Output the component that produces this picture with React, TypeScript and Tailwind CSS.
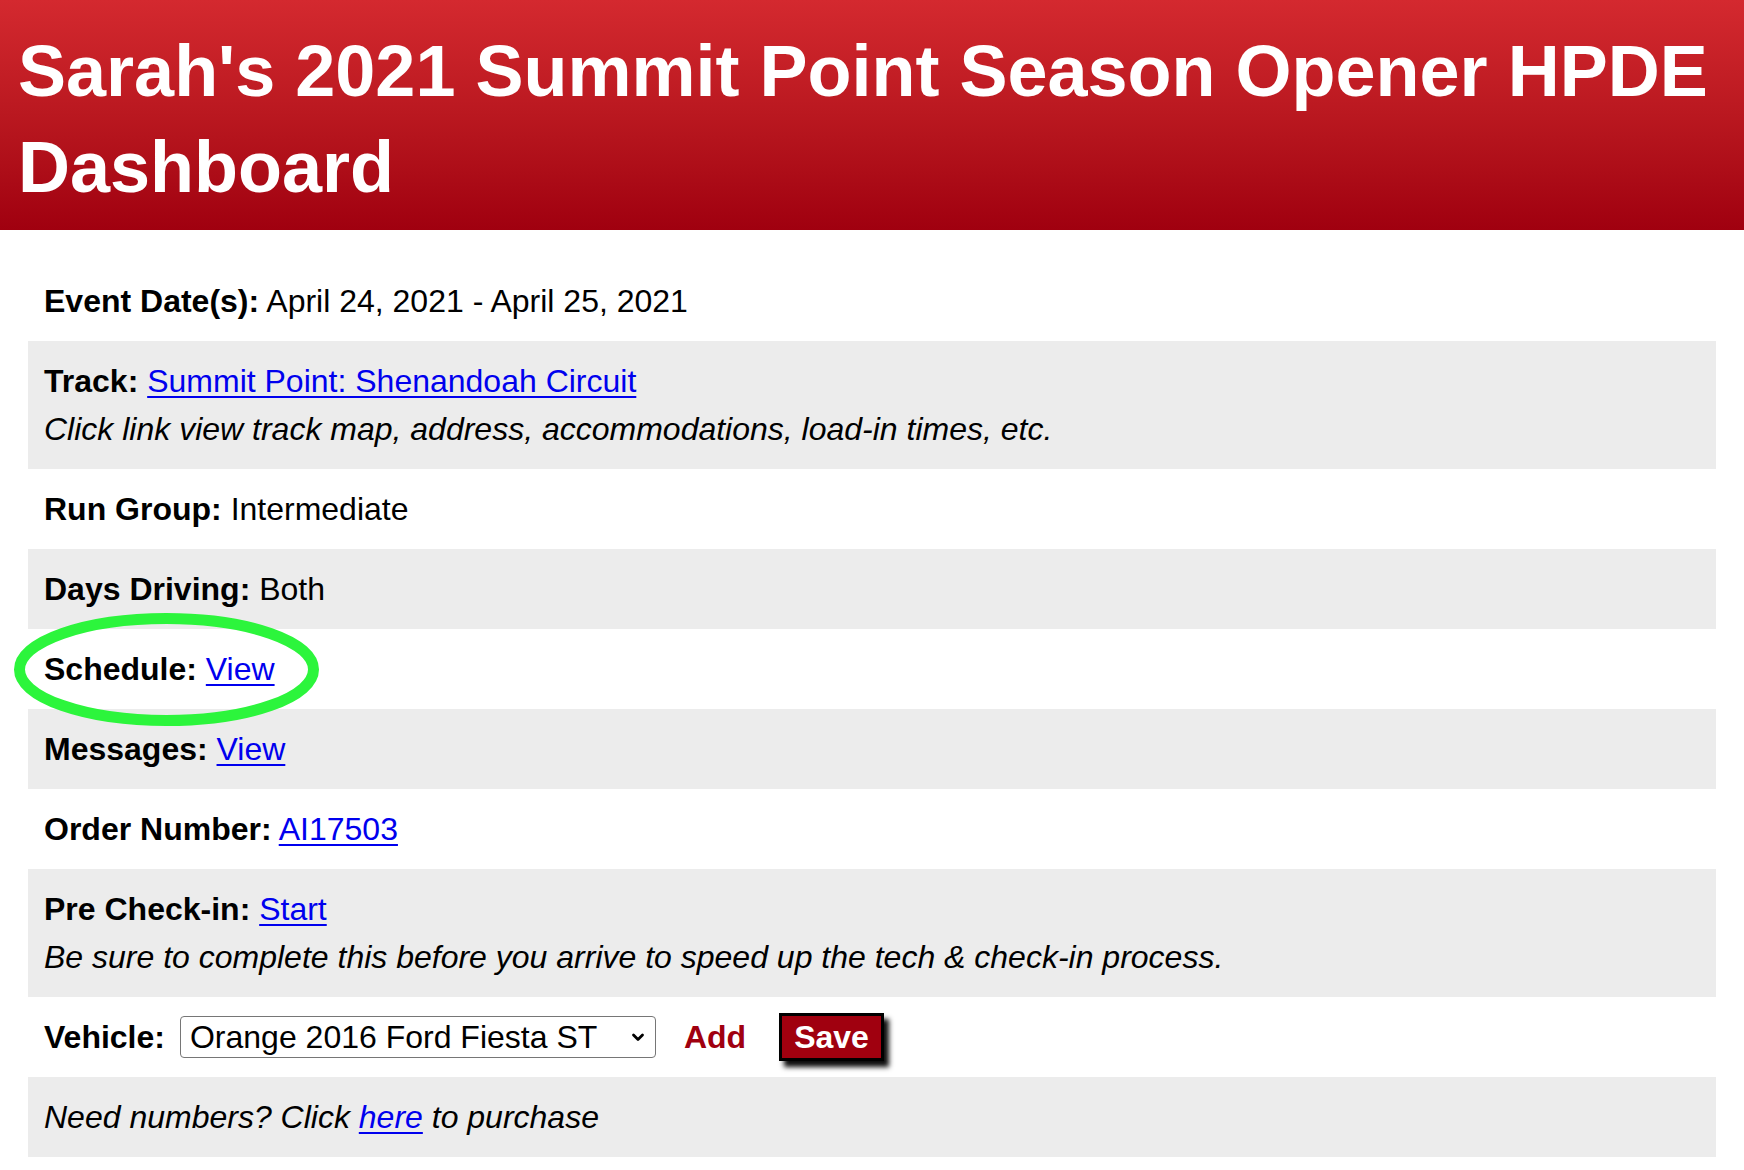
import React from "react";

const font = { fontFamily: '"Liberation Sans", Arial, Helvetica, sans-serif' };

function Row({ gray, children, className = "" }: { gray?: boolean; children: React.ReactNode; className?: string }) {
  return (
    <div className={`px-[16px] py-[16px] text-[32px] leading-[48px] text-black ${gray ? "bg-[#ececec]" : "bg-white"} ${className}`}>
      {children}
    </div>
  );
}

function A({ children }: { children: React.ReactNode }) {
  return <a href="#" className="text-[#0000ee] underline decoration-[2px] underline-offset-[4px]">{children}</a>;
}

export default function App() {
  return (
    <div className="min-h-[1170px] bg-white" style={font}>
      <header className="bg-gradient-to-b from-[#d4292f] to-[#a0000f] pl-[18px] pr-[18px] pt-[23px] pb-[15px]">
        <h1 className="text-[72px] leading-[96px] font-bold text-white">
          Sarah's 2021 Summit Point Season Opener HPDE Dashboard
        </h1>
      </header>
      <main className="px-[28px] pt-[31px]">
        <Row>
          <b>Event Date(s):</b> April 24, 2021 - April 25, 2021
        </Row>
        <Row gray>
          <div>
            <b>Track:</b> <A>Summit Point: Shenandoah Circuit</A>
          </div>
          <div className="italic">Click link view track map, address, accommodations, load-in times, etc.</div>
        </Row>
        <Row>
          <b>Run Group:</b> Intermediate
        </Row>
        <Row gray>
          <b>Days Driving:</b> Both
        </Row>
        <Row className="relative">
          <b>Schedule:</b> <A>View</A>
          <svg
            className="absolute left-[-15px] top-[-17px] pointer-events-none"
            width="307"
            height="115"
            viewBox="0 0 307 115"
          >
            <ellipse cx="153.5" cy="57.5" rx="147" ry="51" fill="none" stroke="#2cf53c" strokeWidth="11" />
          </svg>
        </Row>
        <Row gray>
          <b>Messages:</b> <A>View</A>
        </Row>
        <Row>
          <b>Order Number:</b> <A>AI17503</A>
        </Row>
        <Row gray>
          <div>
            <b>Pre Check-in:</b> <A>Start</A>
          </div>
          <div className="italic">Be sure to complete this before you arrive to speed up the tech &amp; check-in process.</div>
        </Row>
        <Row>
          <div className="flex items-center">
            <b>Vehicle:</b>
            <div className="relative ml-[15px] w-[476px] h-[42px]">
              <select
                className="block appearance-none w-full h-[42px] rounded-[4px] border-[1.5px] border-[#767676] bg-white pl-[9px] pr-[40px] text-[32px] leading-[36px] text-black"
                style={font}
                defaultValue="fiesta"
              >
                <option value="fiesta">Orange 2016 Ford Fiesta ST</option>
              </select>
              <svg
                className="absolute right-[11px] top-[17px] pointer-events-none"
                width="14"
                height="10"
                viewBox="0 0 14 10"
              >
                <path d="M2.5 2 L7 6.5 L11.5 2" fill="none" stroke="#000" strokeWidth="2.8" strokeLinecap="round" strokeLinejoin="round" />
              </svg>
            </div>
            <a href="#" className="ml-[28px] font-bold text-[#a0000f] no-underline">Add</a>
            <button
              className="ml-[33px] h-[48px] border-[3px] border-black bg-[#a0000f] px-[12px] text-[32px] leading-[40px] font-bold text-white shadow-[5px_6px_5px_rgba(0,0,0,0.95)]"
              style={font}
            >
              Save
            </button>
          </div>
        </Row>
        <Row gray>
          <div className="italic">
            Need numbers? Click <A>here</A> to purchase
          </div>
        </Row>
      </main>
    </div>
  );
}
